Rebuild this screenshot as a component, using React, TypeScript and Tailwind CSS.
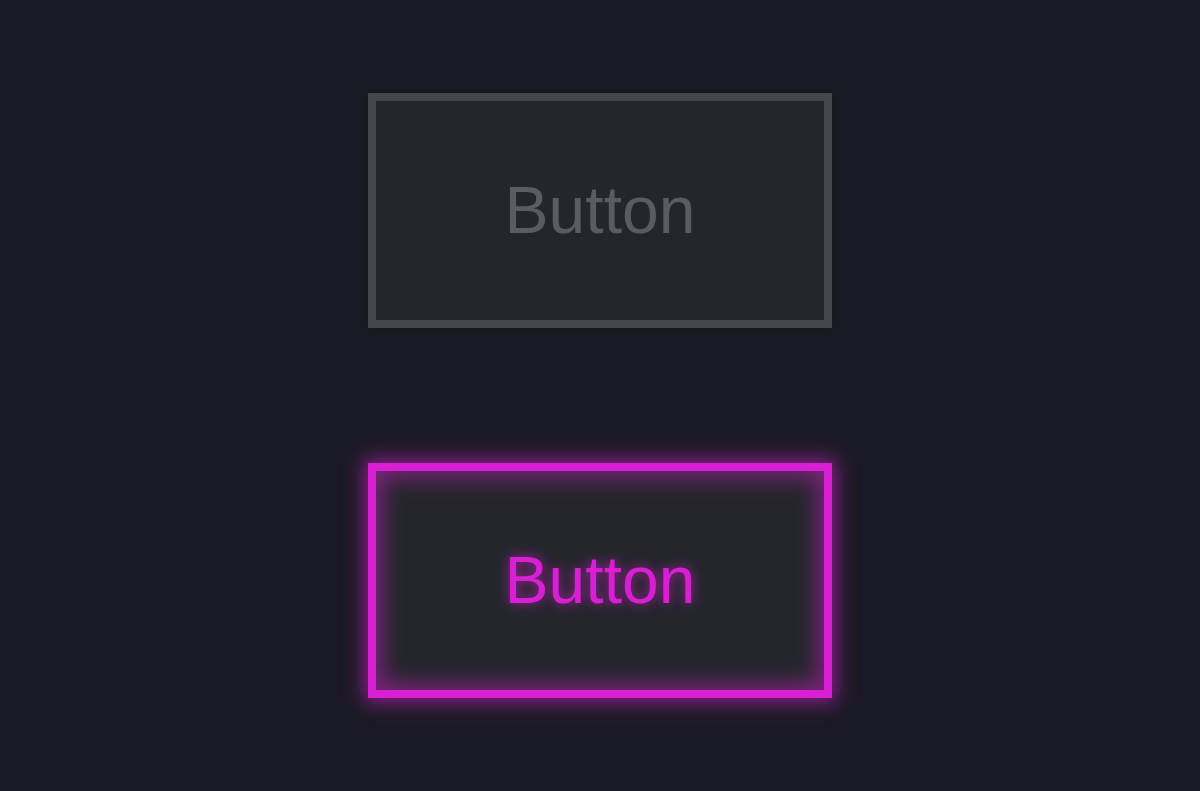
const NeonButton = ({ active }: { active?: boolean }) => {
  return (
    <button
      className={
        active
          ? "w-[464px] h-[235px] bg-[#25262c] border-[8px] border-[#d91fd3] text-[#d91fd3] text-[66px] shadow-[0_0_18px_4px_rgba(217,31,211,0.6),inset_0_0_22px_6px_rgba(217,31,211,0.5)] [text-shadow:0_0_12px_rgba(217,31,211,0.75)]"
          : "w-[464px] h-[235px] bg-[#25262c] border-[8px] border-[#45464b] text-[#5b5c62] text-[66px] shadow-[0_0_8px_2px_rgba(0,0,0,0.15)]"
      }
      style={{ fontFamily: '"Liberation Sans", Arial, sans-serif' }}
    >
      Button
    </button>
  );
};

export default function App() {
  return (
    <div className="w-[1200px] h-[791px] bg-[#1b1b25] flex flex-col items-center pt-[93px] gap-[135px]">
      <NeonButton />
      <NeonButton active />
    </div>
  );
}
